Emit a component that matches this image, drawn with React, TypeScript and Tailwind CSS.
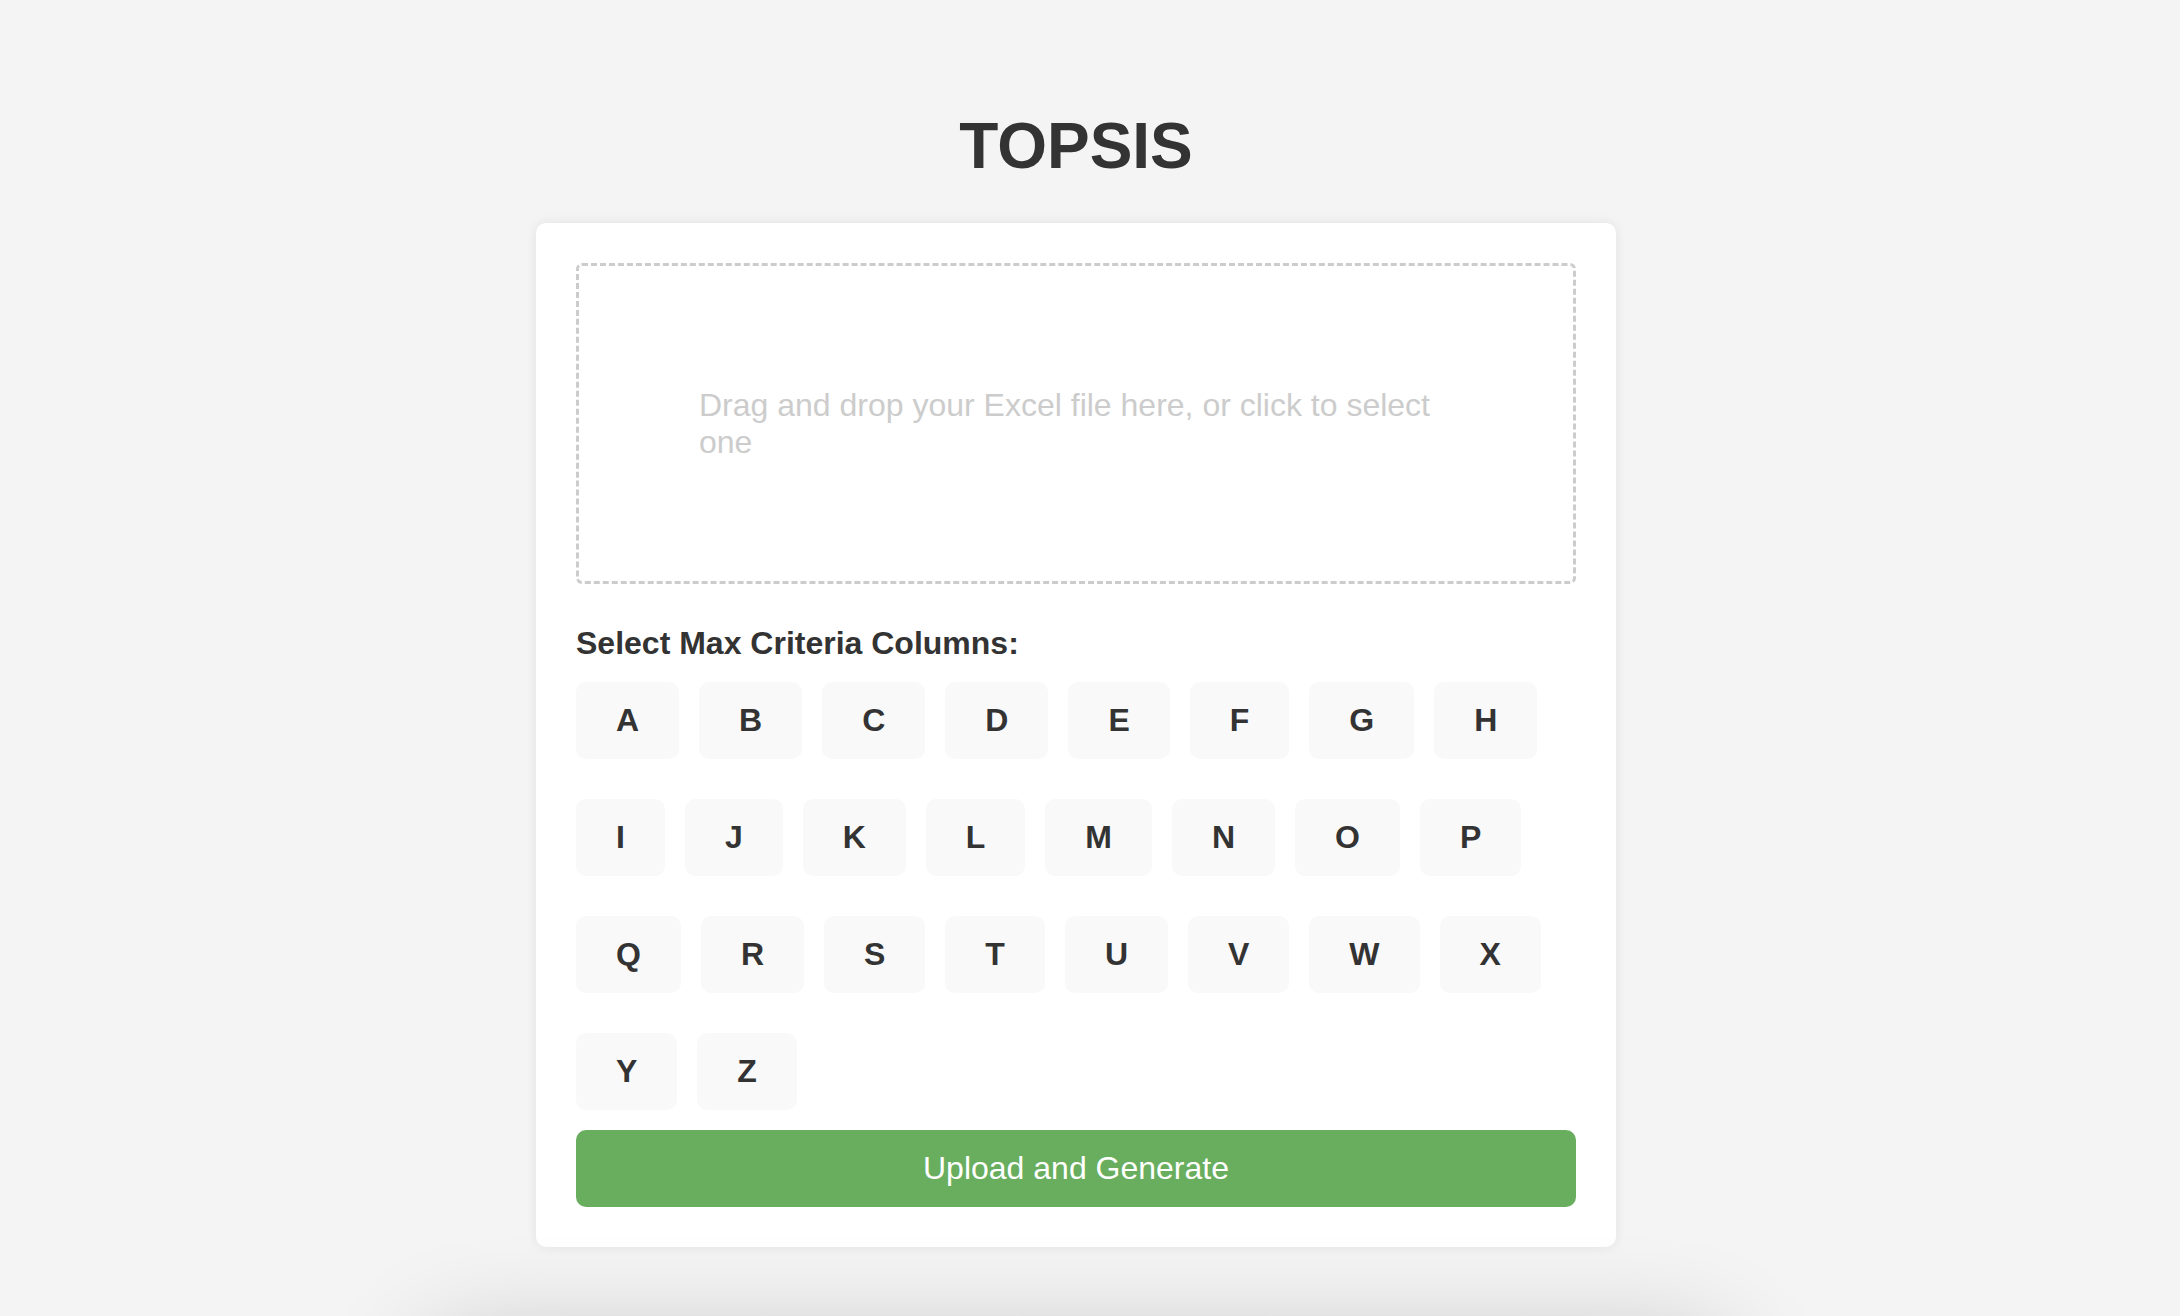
const letters = "ABCDEFGHIJKLMNOPQRSTUVWXYZ".split("");

function ColumnChip({ label }: { label: string }) {
  return (
    <button
      type="button"
      className="rounded-[10px] bg-[#f9f9f9] px-[40px] py-[20px] text-[32px] font-bold leading-[37px] text-[#333]"
    >
      {label}
    </button>
  );
}

export default function App() {
  return (
    <div
      className="h-screen overflow-hidden bg-[#f4f4f4] pr-[28px] text-[#333]"
      style={{ fontFamily: '"Liberation Sans", Arial, sans-serif' }}
    >
      <div className="flex flex-col items-center pt-[109px]">
        <h1 className="text-[64px] font-bold leading-[74px] text-[#333]">TOPSIS</h1>

        <div className="mt-[40px] w-[1080px] rounded-[10px] bg-white p-[40px] shadow-[0_0_12px_rgba(0,0,0,0.08)]">
          {/* drop zone */}
          <div className="flex h-[321px] cursor-pointer items-center justify-center rounded-[6px] border-[3px] border-dashed border-[#ccc]">
            <p className="w-[754px] text-[32px] leading-[37px] text-[#ccc]">
              Drag and drop your Excel file here, or click to select one
            </p>
          </div>

          <h3 className="mt-[41px] text-[32px] font-bold leading-[37px]">
            Select Max Criteria Columns:
          </h3>

          <div className="mt-[20px] flex flex-wrap gap-x-[20px] gap-y-[40px]">
            {letters.map((l) => (
              <ColumnChip key={l} label={l} />
            ))}
          </div>

          <button
            type="button"
            className="mt-[20px] h-[77px] w-full rounded-[10px] bg-[#68ae5e] text-[32px] leading-[37px] text-white"
          >
            Upload and Generate
          </button>
        </div>

        {/* results area sits below the fold */}
        <div className="mt-[100px] h-[300px] w-[1290px] rounded-[10px] bg-white shadow-[0_0_110px_rgba(0,0,0,0.24)]" />
      </div>
    </div>
  );
}
